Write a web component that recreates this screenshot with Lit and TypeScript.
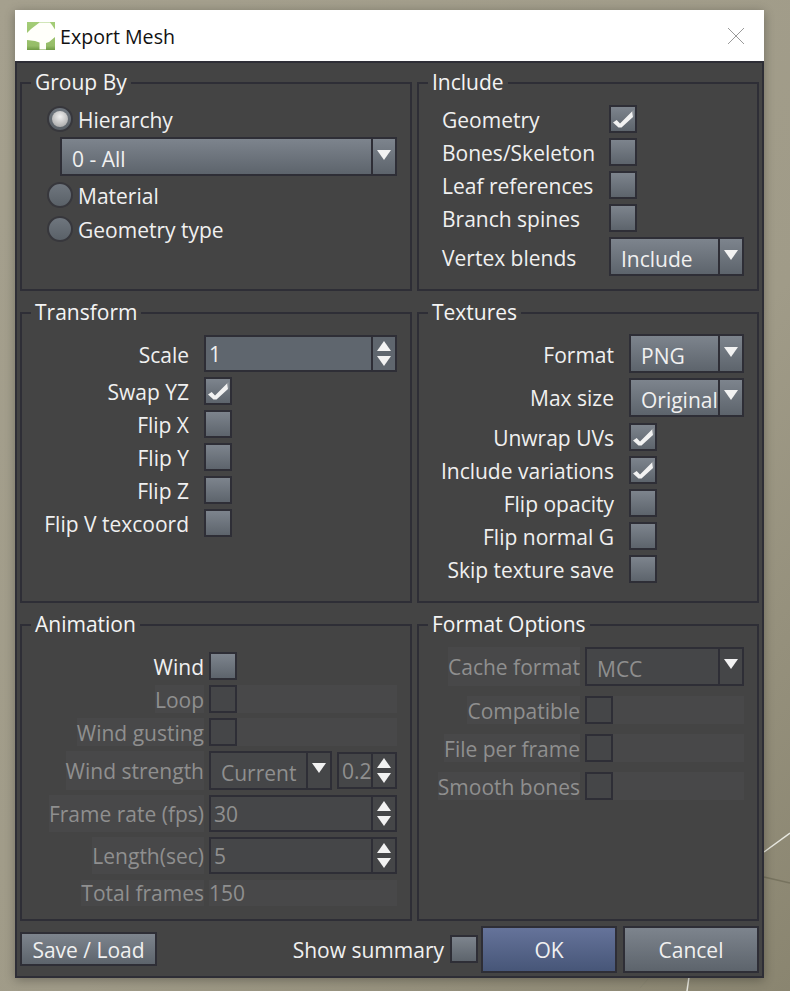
import { LitElement, html, css, nothing } from "lit";
import { customElement, property } from "lit/decorators.js";

const sans = css`"Open Sans", "Noto Sans", "Liberation Sans", sans-serif`;

@customElement("ui-check")
class UiCheck extends LitElement {
  @property({ type: Boolean }) checked = false;
  @property({ type: Boolean, reflect: true }) disabled = false;

  static styles = css`
    :host {
      display: block;
      width: 28px;
      height: 28px;
      box-sizing: border-box;
      border: 2px solid #2e2e36;
      background: linear-gradient(#7d848d, #5d646c);
      flex: none;
    }
    :host([disabled]) {
      background: #454648;
    }
    svg {
      display: block;
    }
  `;

  render() {
    return this.checked
      ? html`<svg width="24" height="24" viewBox="-1 -1 24 24">
          <path d="M20 3.5L21.5 2V8L21 9Z" fill="#9a9ea3" />
          <path d="M1 14.5L4.7 12L8 15.5L20 3.5L21 9L9.5 19.5L6.5 19.5Z" fill="#f2f2f2" />
        </svg>`
      : nothing;
  }
}

@customElement("ui-radio")
class UiRadio extends LitElement {
  @property({ type: Boolean }) checked = false;

  static styles = css`
    :host {
      display: block;
      width: 26px;
      height: 26px;
      box-sizing: border-box;
      border: 2px solid #37373c;
      border-radius: 50%;
      background: linear-gradient(#6f767e, #5a6168);
      flex: none;
      position: relative;
    }
    .dot {
      position: absolute;
      left: 3px;
      top: 3px;
      width: 16px;
      height: 16px;
      border-radius: 50%;
      background: radial-gradient(circle at 50% 35%, #f0f0f0, #9c9c9c);
    }
  `;

  render() {
    return this.checked ? html`<div class="dot"></div>` : nothing;
  }
}

@customElement("ui-combo")
class UiCombo extends LitElement {
  @property() value = "";
  @property({ type: Boolean, reflect: true }) disabled = false;

  static styles = css`
    :host {
      display: flex;
      box-sizing: border-box;
      height: 39px;
      border: 2px solid #2e2e36;
      background: linear-gradient(#7d848d, #5d646c);
      color: #f0f0f0;
      font: 21px ${sans};
      flex: none;
    }
    :host([disabled]) {
      background: #454648;
      color: #8f8f8f;
    }
    .value {
      flex: 1;
      min-width: 0;
      padding-left: 10px;
      line-height: 40px;
      white-space: nowrap;
      overflow: hidden;
    }
    .drop {
      box-sizing: border-box;
      width: 24px;
      border-left: 2px solid #2e2e36;
      display: flex;
      align-items: center;
      justify-content: center;
      padding-bottom: 4px;
    }
    svg {
      display: block;
    }
  `;

  render() {
    return html`<div class="value">${this.value}</div>
      <div class="drop">
        <svg width="14" height="10" viewBox="0 0 14 10"><path d="M0 0H14L7 10Z" fill="#f2f2f2" /></svg>
      </div>`;
  }
}

@customElement("ui-spin")
class UiSpin extends LitElement {
  @property() value = "";
  @property({ type: Boolean, reflect: true }) disabled = false;

  static styles = css`
    :host {
      display: flex;
      box-sizing: border-box;
      height: 37px;
      border: 2px solid #2e2e36;
      background: #5f666e;
      color: #f0f0f0;
      font: 21px ${sans};
      flex: none;
    }
    :host([disabled]) {
      background: #454648;
      color: #8f8f8f;
    }
    .value {
      flex: 1;
      min-width: 0;
      padding-left: 3px;
      line-height: 35px;
      white-space: nowrap;
      overflow: hidden;
    }
    .arrows {
      box-sizing: border-box;
      width: 24px;
      border-left: 2px solid #2e2e36;
      display: flex;
      flex-direction: column;
      align-items: center;
      justify-content: center;
      gap: 5px;
    }
    svg {
      display: block;
    }
  `;

  render() {
    return html`<div class="value">${this.value}</div>
      <div class="arrows">
        <svg width="14" height="10" viewBox="0 0 14 10"><path d="M0 10H14L7 0Z" fill="#f2f2f2" /></svg>
        <svg width="14" height="10" viewBox="0 0 14 10"><path d="M0 0H14L7 10Z" fill="#f2f2f2" /></svg>
      </div>`;
  }
}

@customElement("app-root")
class AppRoot extends LitElement {
  static styles = css`
    :host {
      display: block;
      width: 790px;
      height: 991px;
      overflow: hidden;
      position: relative;
      background: linear-gradient(135deg, #a5a08e 0%, #a09b88 60%, #8a8570 100%);
      font: 21px ${sans};
      color: #f0f0f0;
    }
    .scenery {
      position: absolute;
      inset: 0;
    }
    .dialog {
      position: absolute;
      left: 15px;
      top: 10px;
      width: 749px;
      height: 968px;
      box-sizing: border-box;
      display: flex;
      flex-direction: column;
      background: #444444;
      border: solid #2e2e36;
      border-width: 0 2px 2px 2px;
      box-shadow: 0 2px 10px rgba(0, 0, 0, 0.3);
    }
    .title {
      height: 51px;
      margin: 0 -2px;
      flex: none;
      background: #fff;
      border-bottom: 2px solid #2e2e36;
      display: flex;
      align-items: center;
      gap: 5px;
      padding: 0 20px 0 12px;
      color: #111;
      font-size: 19.6px;
    }
    .title .name {
      flex: 1;
      padding-top: 2px;
    }
    .title svg {
      display: block;
    }
    .panels {
      display: grid;
      grid-template-columns: 392px 342px;
      grid-template-rows: 220px 302px 308px;
      column-gap: 5px;
      row-gap: 10px;
      padding: 8px 3px 0;
    }
    fieldset {
      margin: 0;
      min-width: 0;
      border: 2px solid #2e2e36;
      padding: 0;
    }
    legend {
      margin-left: 9px;
      padding: 0 4px 2px;
      line-height: 22px;
      color: #f4f4f4;
    }
    .stack {
      display: flex;
      flex-direction: column;
    }
    .line {
      display: flex;
      align-items: center;
      flex: none;
    }
    .r28 { height: 28px; }
    .r33 { height: 33px; }
    .r34 { height: 34px; gap: 5px; }
    .r38 { height: 38px; }
    .r39 { height: 39px; }
    .r42 { height: 42px; }
    .r43 { height: 43px; }
    .r44 { height: 44px; }

    .text {
      padding-top: 2px;
    }
    .label {
      flex: none;
      display: flex;
      justify-content: flex-end;
      white-space: nowrap;
      box-sizing: border-box;
      padding-top: 2px;
      width: var(--label-w);
      margin-right: var(--label-gap);
    }
    .off {
      color: #8f8f8f;
      background: #484849;
      line-height: 28px;
    }
    .label .off {
      margin-top: -2px;
      padding-top: 2px;
      line-height: 26px;
    }
    .label .lh24 { line-height: 24px; }
    .label .lh35 { line-height: 35px; }
    .label .lh37 { line-height: 37px; }
    .fill {
      height: 28px;
    }

    .group .stack {
      padding: 7px 0 0 25px;
    }
    .group ui-combo {
      width: 337px;
      margin: 1px 0 2px 13px;
    }
    .include {
      --label-w: 167px;
      --label-gap: 0px;
    }
    .include .stack {
      padding: 7px 0 0 23px;
    }
    .include .label {
      justify-content: flex-start;
    }
    .include .blends {
      margin-top: 3px;
    }
    .include ui-combo {
      width: 135px;
    }
    .transform {
      --label-w: 167px;
      --label-gap: 15px;
    }
    .transform .stack {
      padding-top: 9px;
    }
    .transform .scale {
      margin-bottom: 1px;
    }
    .transform ui-spin {
      width: 193px;
    }
    .textures {
      --label-w: 195px;
      --label-gap: 15px;
    }
    .textures .stack {
      padding-top: 7px;
    }
    .textures ui-combo {
      width: 115px;
    }
    .textures .maxsize {
      margin-bottom: 1px;
    }
    .animation {
      --label-w: 182px;
      --label-gap: 5px;
    }
    .animation .stack {
      padding-top: 12px;
    }
    .animation .fill {
      width: 160px;
    }
    .animation .strength {
      width: 123px;
    }
    .animation .amount {
      width: 60px;
      margin-left: 5px;
    }
    .animation .long {
      width: 188px;
    }
    .animation .total {
      margin-top: 3px;
    }
    .animation .count {
      line-height: 26px;
    }
    .animation .total .label {
      padding-top: 0;
    }
    .animation .total .label .off {
      margin-top: 0;
      padding-top: 0;
    }
    .options {
      --label-w: 161px;
      --label-gap: 5px;
    }
    .options .stack {
      padding-top: 7px;
    }
    .options .cache {
      margin-bottom: 3px;
    }
    .options ui-combo {
      width: 159px;
    }
    .options .fill {
      width: 131px;
    }

    .footer {
      flex: 1;
      display: flex;
      align-items: center;
      padding: 1px 3px 0;
    }
    .btn {
      box-sizing: border-box;
      border: 2px solid #2e2e36;
      background: linear-gradient(#7d848d, #5d646c);
      display: flex;
      align-items: center;
      justify-content: center;
      padding-top: 2px;
    }
    .save {
      width: 137px;
      height: 34px;
    }
    .summary {
      margin-left: auto;
      margin-right: 6px;
      padding-top: 2px;
    }
    .big {
      width: 136px;
      height: 47px;
      margin-left: 3px;
    }
    .ok {
      background: linear-gradient(#65739a, #475678);
    }
    .cancel {
      margin-left: 6px;
    }
  `;

  checkRow(name: string, checked: boolean) {
    return html`<div class="line r33">
      <div class="label">${name}</div>
      <ui-check ?checked=${checked}></ui-check>
    </div>`;
  }

  offRow(name: string, rowClass: string) {
    return html`<div class="line ${rowClass}">
      <div class="label"><span class="off">${name}</span></div>
      <ui-check disabled></ui-check>
      <div class="off fill"></div>
    </div>`;
  }

  render() {
    return html`
      <svg class="scenery" width="790" height="991" viewBox="0 0 790 991">
        <path d="M764 852L790 833" stroke="#e8e8e0" stroke-width="1.5" fill="none" />
        <path d="M764 877L790 883" stroke="#77735f" stroke-width="1.5" fill="none" />
        <path d="M689 977L687 991" stroke="#e8e8e0" stroke-width="1.5" fill="none" />
        <path d="M648 979L640 988" stroke="#8a8672" stroke-width="1" fill="none" />
      </svg>
      <div class="dialog">
        <div class="title">
          <svg width="28" height="28" viewBox="0 0 28 28">
            <defs>
              <linearGradient id="leaf" x1="0" y1="0" x2="0" y2="1">
                <stop offset="0" stop-color="#a4cd78" />
                <stop offset="0.85" stop-color="#96bd68" />
                <stop offset="1" stop-color="#6f9a45" />
              </linearGradient>
            </defs>
            <rect width="28" height="28" fill="url(#leaf)" />
            <path
              d="M12.5 0.5H23L25 3L28 7.5V15L22 20L19 21V27.5H12.5V20.5L8 19L0 18V11L4 7Z"
              fill="#fffffa"
            />
          </svg>
          <span class="name">Export Mesh</span>
          <svg width="16" height="16" viewBox="0 0 16 16">
            <path d="M0 0L16 16M16 0L0 16" stroke="#9a9a9a" stroke-width="1" fill="none" />
          </svg>
        </div>
        <div class="panels">
          <fieldset class="group">
            <legend>Group By</legend>
            <div class="stack">
              <div class="line r34"><ui-radio checked></ui-radio><span class="text">Hierarchy</span></div>
              <ui-combo value="0 - All"></ui-combo>
              <div class="line r34"><ui-radio></ui-radio><span class="text">Material</span></div>
              <div class="line r34"><ui-radio></ui-radio><span class="text">Geometry type</span></div>
            </div>
          </fieldset>
          <fieldset class="include">
            <legend>Include</legend>
            <div class="stack">
              ${this.checkRow("Geometry", true)}
              ${this.checkRow("Bones/Skeleton", false)}
              ${this.checkRow("Leaf references", false)}
              ${this.checkRow("Branch spines", false)}
              <div class="line r39 blends">
                <div class="label">Vertex blends</div>
                <ui-combo value="Include"></ui-combo>
              </div>
            </div>
          </fieldset>
          <fieldset class="transform">
            <legend>Transform</legend>
            <div class="stack">
              <div class="line r39 scale">
                <div class="label">Scale</div>
                <ui-spin value="1"></ui-spin>
              </div>
              ${this.checkRow("Swap YZ", true)}
              ${this.checkRow("Flip X", false)}
              ${this.checkRow("Flip Y", false)}
              ${this.checkRow("Flip Z", false)}
              ${this.checkRow("Flip V texcoord", false)}
            </div>
          </fieldset>
          <fieldset class="textures">
            <legend>Textures</legend>
            <div class="stack">
              <div class="line r43">
                <div class="label">Format</div>
                <ui-combo value="PNG"></ui-combo>
              </div>
              <div class="line r44 maxsize">
                <div class="label">Max size</div>
                <ui-combo value="Original"></ui-combo>
              </div>
              ${this.checkRow("Unwrap UVs", true)}
              ${this.checkRow("Include variations", true)}
              ${this.checkRow("Flip opacity", false)}
              ${this.checkRow("Flip normal G", false)}
              ${this.checkRow("Skip texture save", false)}
            </div>
          </fieldset>
          <fieldset class="animation">
            <legend>Animation</legend>
            <div class="stack">
              ${this.checkRow("Wind", false)}
              ${this.offRow("Loop", "r33")}
              ${this.offRow("Wind gusting", "r33")}
              <div class="line r44">
                <div class="label"><span class="off lh37">Wind strength</span></div>
                <ui-combo class="strength" disabled value="Current"></ui-combo>
                <ui-spin class="amount" disabled value="0.2"></ui-spin>
              </div>
              <div class="line r42">
                <div class="label"><span class="off lh35">Frame rate (fps)</span></div>
                <ui-spin class="long" disabled value="30"></ui-spin>
              </div>
              <div class="line r42">
                <div class="label"><span class="off lh35">Length(sec)</span></div>
                <ui-spin class="long" disabled value="5"></ui-spin>
              </div>
              <div class="line r28 total">
                <div class="label"><span class="off count">Total frames</span></div>
                <div class="off count long">150</div>
              </div>
            </div>
          </fieldset>
          <fieldset class="options">
            <legend>Format Options</legend>
            <div class="stack">
              <div class="line r44 cache">
                <div class="label"><span class="off lh37">Cache format</span></div>
                <ui-combo disabled value="MCC"></ui-combo>
              </div>
              ${this.offRow("Compatible", "r38")}
              ${this.offRow("File per frame", "r38")}
              ${this.offRow("Smooth bones", "r38")}
            </div>
          </fieldset>
        </div>
        <div class="footer">
          <div class="btn save">Save / Load</div>
          <div class="summary">Show summary</div>
          <ui-check></ui-check>
          <div class="btn big ok">OK</div>
          <div class="btn big cancel">Cancel</div>
        </div>
      </div>
    `;
  }
}
